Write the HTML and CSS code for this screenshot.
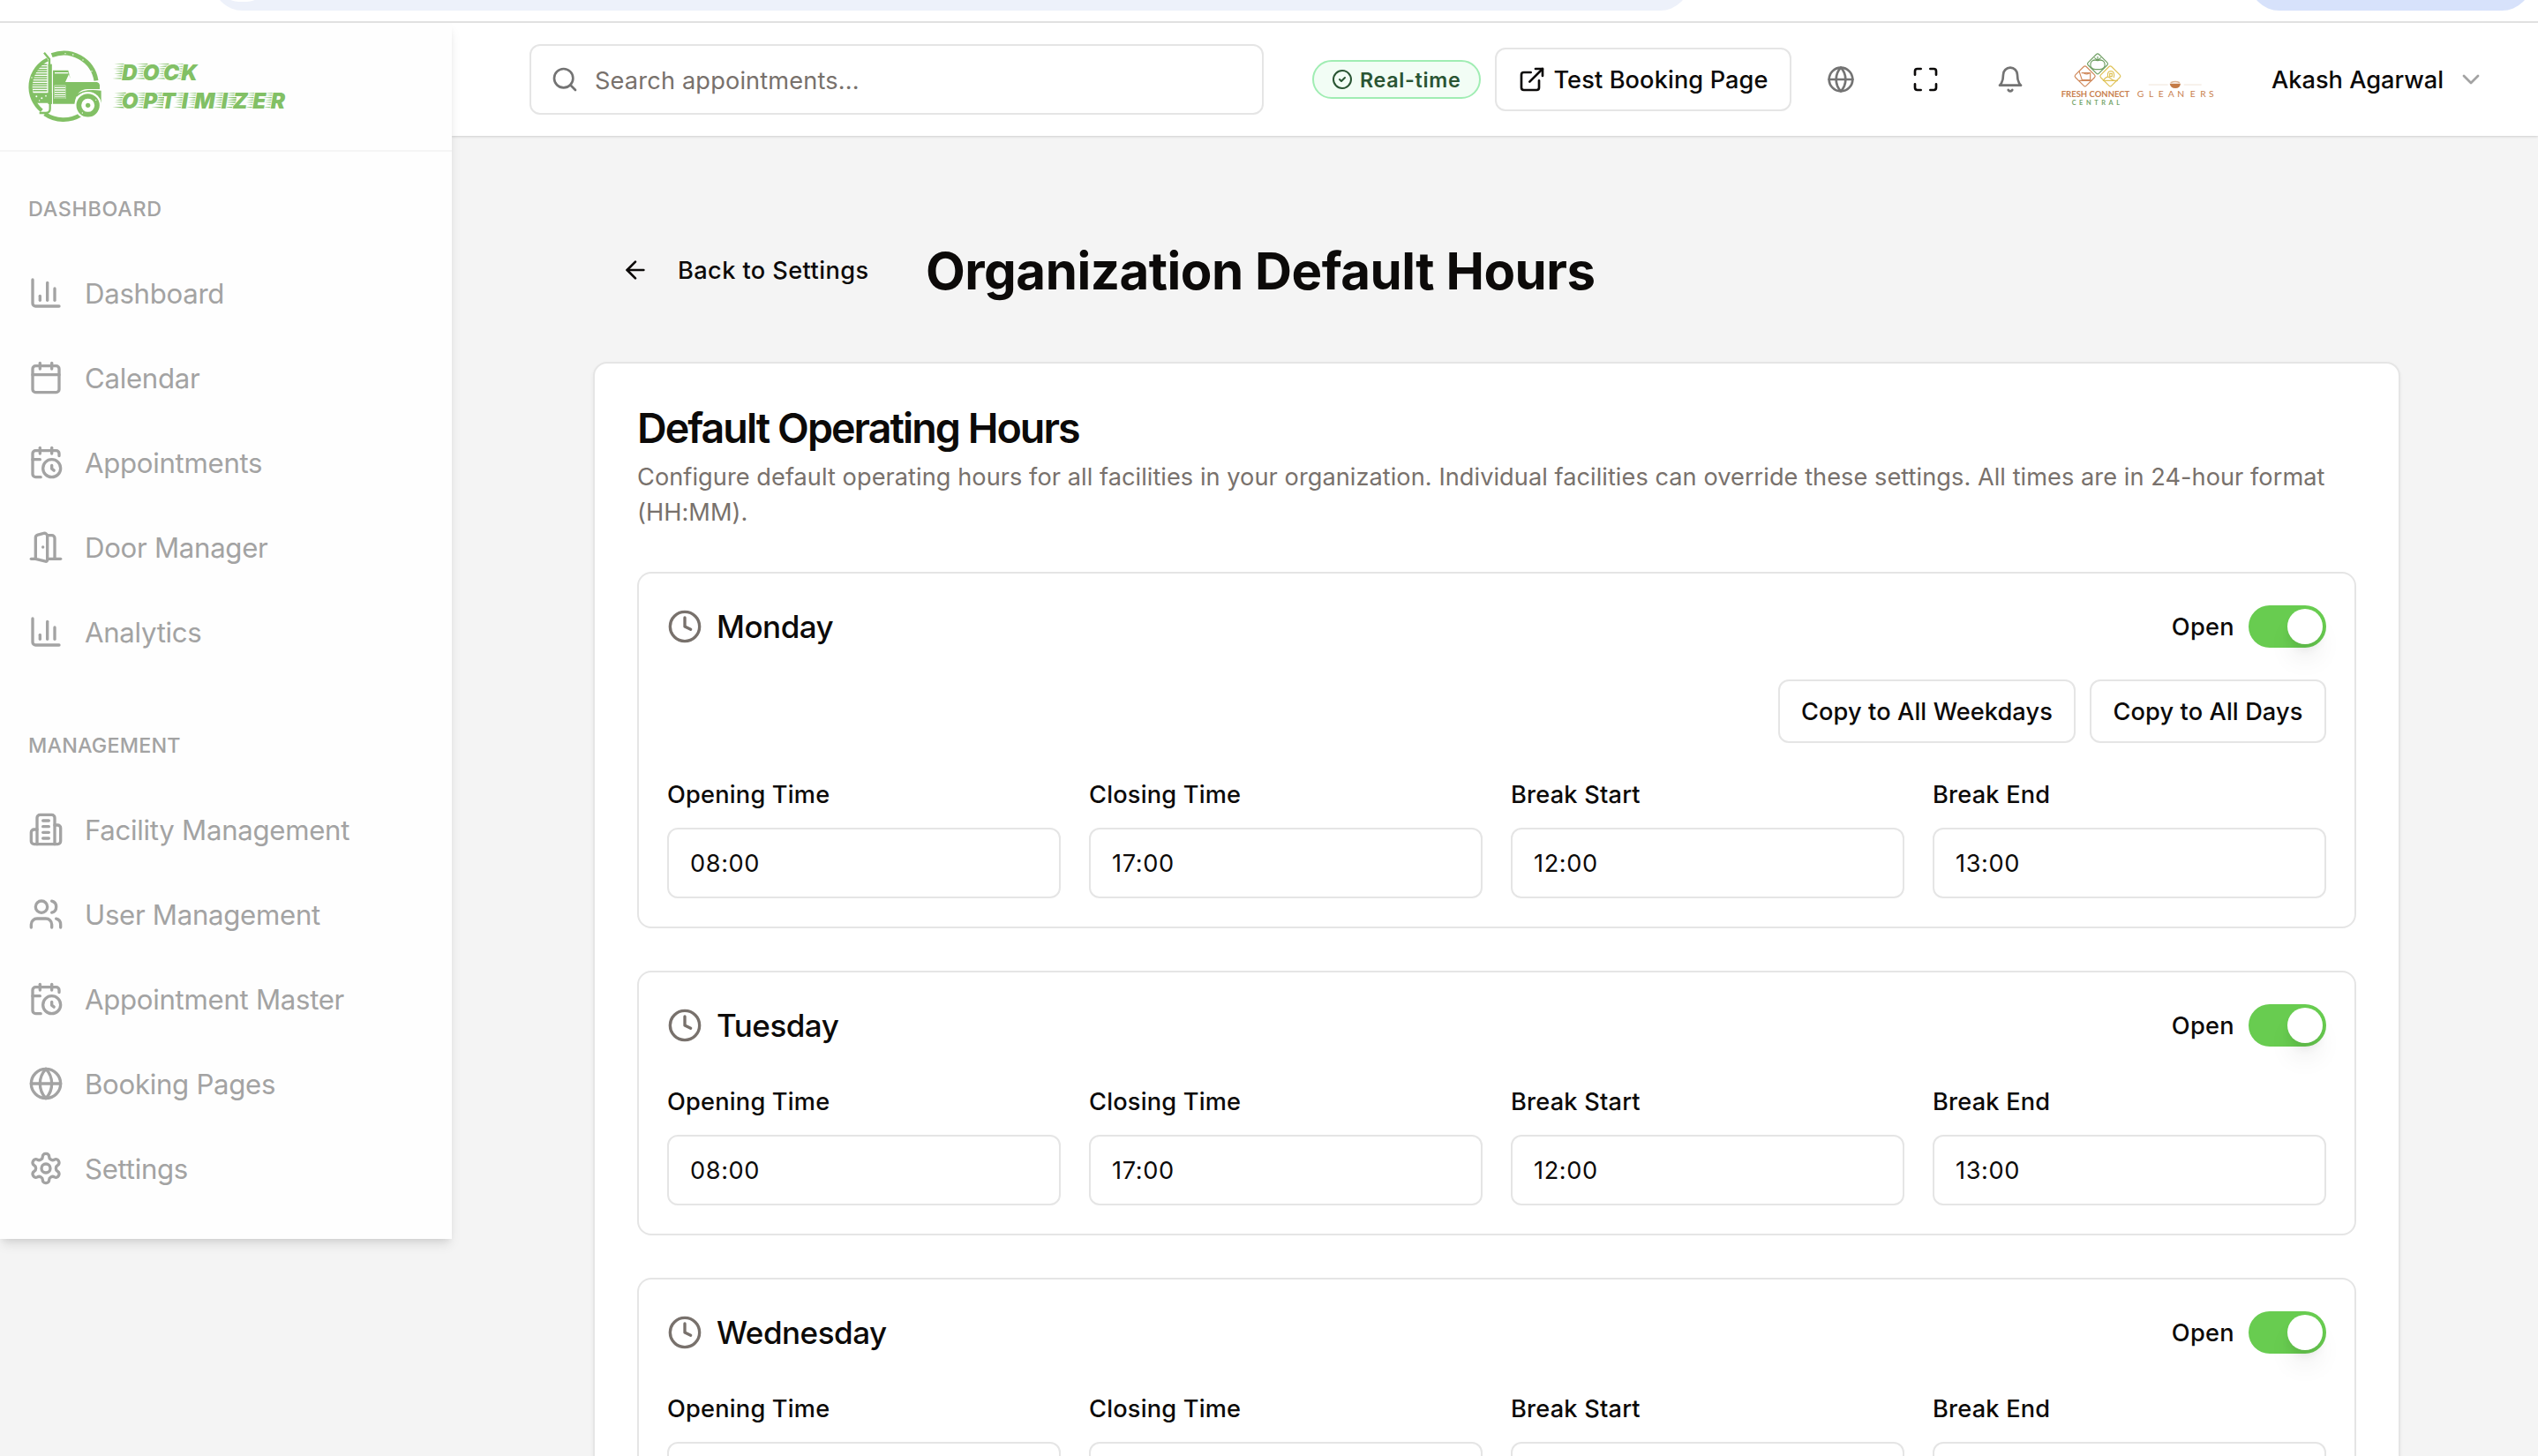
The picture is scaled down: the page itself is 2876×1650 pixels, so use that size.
FILE: index.html
```html
<!DOCTYPE html>
<html lang="en">
<head>
<meta charset="utf-8">
<title>Organization Default Hours</title>
<link rel="stylesheet" href="styles.css">
</head>
<body>
<svg class="sprite" aria-hidden="true">
  <symbol id="i-chart" viewBox="0 0 24 24"><path d="M3 3v16a2 2 0 0 0 2 2h16"/><path d="M18 17V9"/><path d="M13 17V5"/><path d="M8 17v-3"/></symbol>
  <symbol id="i-calendar" viewBox="0 0 24 24"><path d="M8 2v4"/><path d="M16 2v4"/><rect width="18" height="18" x="3" y="4" rx="2"/><path d="M3 10h18"/></symbol>
  <symbol id="i-calendar-clock" viewBox="0 0 24 24"><path d="M21 7.5V6a2 2 0 0 0-2-2H5a2 2 0 0 0-2 2v14a2 2 0 0 0 2 2h3.5"/><path d="M16 2v4"/><path d="M8 2v4"/><path d="M3 10h5"/><path d="M17.5 17.5 16 16.3V14"/><circle cx="16" cy="16" r="6"/></symbol>
  <symbol id="i-door" viewBox="0 0 24 24"><path d="M13 4h3a2 2 0 0 1 2 2v14"/><path d="M2 20h3"/><path d="M13 20h9"/><path d="M10 12v.01"/><path d="M13 4.562v16.157a1 1 0 0 1-1.242.97L5 20V5.562a2 2 0 0 1 1.515-1.94l4-1A2 2 0 0 1 13 4.561Z"/></symbol>
  <symbol id="i-building" viewBox="0 0 24 24"><path d="M6 22V4a2 2 0 0 1 2-2h8a2 2 0 0 1 2 2v18Z"/><path d="M6 12H4a2 2 0 0 0-2 2v6a2 2 0 0 0 2 2h2"/><path d="M18 9h2a2 2 0 0 1 2 2v9a2 2 0 0 1-2 2h-2"/><path d="M10 6h4"/><path d="M10 10h4"/><path d="M10 14h4"/><path d="M10 18h4"/></symbol>
  <symbol id="i-users" viewBox="0 0 24 24"><path d="M16 21v-2a4 4 0 0 0-4-4H6a4 4 0 0 0-4 4v2"/><circle cx="9" cy="7" r="4"/><path d="M22 21v-2a4 4 0 0 0-3-3.87"/><path d="M16 3.13a4 4 0 0 1 0 7.75"/></symbol>
  <symbol id="i-globe" viewBox="0 0 24 24"><circle cx="12" cy="12" r="10"/><path d="M12 2a14.5 14.5 0 0 0 0 20 14.5 14.5 0 0 0 0-20"/><path d="M2 12h20"/></symbol>
  <symbol id="i-settings" viewBox="0 0 24 24"><path d="M12.22 2h-.44a2 2 0 0 0-2 2v.18a2 2 0 0 1-1 1.73l-.43.25a2 2 0 0 1-2 0l-.15-.08a2 2 0 0 0-2.73.73l-.22.38a2 2 0 0 0 .73 2.73l.15.1a2 2 0 0 1 1 1.72v.51a2 2 0 0 1-1 1.74l-.15.09a2 2 0 0 0-.73 2.73l.22.38a2 2 0 0 0 2.73.73l.15-.08a2 2 0 0 1 2 0l.43.25a2 2 0 0 1 1 1.73V20a2 2 0 0 0 2 2h.44a2 2 0 0 0 2-2v-.18a2 2 0 0 1 1-1.73l.43-.25a2 2 0 0 1 2 0l.15.08a2 2 0 0 0 2.73-.73l.22-.39a2 2 0 0 0-.73-2.73l-.15-.08a2 2 0 0 1-1-1.74v-.5a2 2 0 0 1 1-1.74l.15-.09a2 2 0 0 0 .73-2.73l-.22-.38a2 2 0 0 0-2.73-.73l-.15.08a2 2 0 0 1-2 0l-.43-.25a2 2 0 0 1-1-1.73V4a2 2 0 0 0-2-2z"/><circle cx="12" cy="12" r="3"/></symbol>
  <symbol id="i-search" viewBox="0 0 24 24"><circle cx="11" cy="11" r="8"/><path d="m21 21-4.3-4.3"/></symbol>
  <symbol id="i-check" viewBox="0 0 24 24"><circle cx="12" cy="12" r="10"/><path d="m9 12 2 2 4-4"/></symbol>
  <symbol id="i-external" viewBox="0 0 24 24"><path d="M15 3h6v6"/><path d="M10 14 21 3"/><path d="M18 13v6a2 2 0 0 1-2 2H5a2 2 0 0 1-2-2V8a2 2 0 0 1 2-2h6"/></symbol>
  <symbol id="i-maximize" viewBox="0 0 24 24"><path d="M8 3H5a2 2 0 0 0-2 2v3"/><path d="M21 8V5a2 2 0 0 0-2-2h-3"/><path d="M3 16v3a2 2 0 0 0 2 2h3"/><path d="M16 21h3a2 2 0 0 0 2-2v-3"/></symbol>
  <symbol id="i-bell" viewBox="0 0 24 24"><path d="M6 8a6 6 0 0 1 12 0c0 7 3 9 3 9H3s3-2 3-9"/><path d="M10.3 21a1.94 1.94 0 0 0 3.4 0"/></symbol>
  <symbol id="i-chevron" viewBox="0 0 24 24"><path d="m6 9 6 6 6-6"/></symbol>
  <symbol id="i-arrow-left" viewBox="0 0 24 24"><path d="m12 19-7-7 7-7"/><path d="M19 12H5"/></symbol>
  <symbol id="i-clock" viewBox="0 0 24 24"><circle cx="12" cy="12" r="10"/><path d="M12 6v6l4 2"/></symbol>
</svg>

<div class="browser">
  <div class="omnibox"><span class="site-info"></span></div>
  <div class="chip"></div>
</div>

<div class="app">
  <aside class="sidebar">
    <div class="brand">
      <svg class="brand-logo" viewBox="0 0 930 300" role="img" aria-label="Dock Optimizer">
        <g fill="none" stroke="#82c065">
          <path d="M104 44A112 112 0 0 1 255 130" stroke-width="15"/>
          <path d="M90 58A104 104 0 0 0 70 232" stroke-width="13"/>
          <path d="M80 243A112 112 0 0 0 203 246" stroke-width="14"/>
          <path d="M78 35l18 22v25" stroke-width="7"/>
          <path d="M98 74v136" stroke-width="13"/>
          <path d="M98 208v18q0 14-14 14H62" stroke-width="7"/>
          <path d="M66 76h22M60 84h28M54 92h34M48 100h40M44 108h44M42 116h46M40 124h48M38 132h50M38 140h50M38 148h50M38 156h50M40 164h48" stroke-width="4.5"/>
        </g>
        <g fill="#82c065">
          <path d="M32 172h72v34H50q-12-14-18-34z"/>
          <path d="M108 95h52l8 30-6-16-12 26h108q8 2 9 10v14h-42q-34 0-42 42v8h-75v-64z"/>
          <path d="M188 178q26-22 84-14v46q-4-34-38-38-26-4-46 14z"/>
        </g>
        <rect x="114" y="102" width="46" height="4" fill="#fff"/>
        <rect x="113" y="146" width="38" height="46" fill="#fff"/>
        <path d="M114 150h36M114 158h36M114 166h36M114 174h36M114 182h36M114 189h36" stroke="#82c065" stroke-width="4"/>
        <circle cx="227" cy="214" r="46" fill="#fff"/>
        <circle cx="227" cy="214" r="31" fill="none" stroke="#82c065" stroke-width="17"/>
        <circle cx="227" cy="214" r="8" fill="#82c065"/>
        <g fill="#fff"><circle cx="150" cy="38" r="2"/><circle cx="176" cy="42" r="2.5"/><circle cx="210" cy="60" r="2"/><circle cx="240" cy="98" r="2"/><circle cx="52" cy="184" r="3"/><circle cx="70" cy="190" r="3"/><circle cx="62" cy="198" r="2"/><circle cx="84" cy="182" r="2.5"/><circle cx="36" cy="120" r="2"/><circle cx="208" cy="240" r="2"/><circle cx="254" cy="196" r="2"/></g>
        <defs>
          <g id="speed" fill="#82c065"><path d="M4 1.500 44-1v4zM10 9 43 6v5zM0 17l42-3v5.500zM8 25l33-3v5.500zM4 33l36-3v5.500zM10 41l29-3v5.500zM-2 50l40-3v5.500z"/></g>
        </defs>
        <g>
          <use href="#speed" x="312" y="73"/><use href="#speed" x="386" y="73"/><use href="#speed" x="458" y="73"/><use href="#speed" x="520" y="73"/>
          <use href="#speed" x="312" y="171"/><use href="#speed" x="386" y="171"/><use href="#speed" x="444" y="171"/><use href="#speed" x="518" y="171"/><use href="#speed" x="562" y="171"/><use href="#speed" x="652" y="171"/><use href="#speed" x="690" y="171"/><use href="#speed" x="760" y="171"/><use href="#speed" x="822" y="171"/>
        </g>
        <g class="brand-word">
          <text x="342 413 483 544" y="128">DOCK</text>
          <text x="341 415 475 545 589 680 719 787 848" y="226">OPTIMIZER</text>
        </g>
      </svg>
    </div>
    <nav class="nav">
      <h2 class="nav-title nav-title-first">DASHBOARD</h2>
      <a class="nav-item"><svg class="icon"><use href="#i-chart"/></svg><span>Dashboard</span></a>
      <a class="nav-item"><svg class="icon"><use href="#i-calendar"/></svg><span>Calendar</span></a>
      <a class="nav-item"><svg class="icon"><use href="#i-calendar-clock"/></svg><span>Appointments</span></a>
      <a class="nav-item"><svg class="icon"><use href="#i-door"/></svg><span>Door Manager</span></a>
      <a class="nav-item"><svg class="icon"><use href="#i-chart"/></svg><span>Analytics</span></a>
      <h2 class="nav-title">MANAGEMENT</h2>
      <a class="nav-item"><svg class="icon"><use href="#i-building"/></svg><span>Facility Management</span></a>
      <a class="nav-item"><svg class="icon"><use href="#i-users"/></svg><span>User Management</span></a>
      <a class="nav-item"><svg class="icon"><use href="#i-calendar-clock"/></svg><span>Appointment Master</span></a>
      <a class="nav-item"><svg class="icon"><use href="#i-globe"/></svg><span>Booking Pages</span></a>
      <a class="nav-item"><svg class="icon"><use href="#i-settings"/></svg><span>Settings</span></a>
    </nav>
  </aside>

  <div class="content">
    <header class="topbar">
      <div class="search"><svg class="icon icon-sm"><use href="#i-search"/></svg><span>Search appointments...</span></div>
      <div class="badge"><svg class="icon icon-xs"><use href="#i-check"/></svg><span>Real-time</span></div>
      <button class="btn btn-test"><svg class="icon icon-sm"><use href="#i-external"/></svg><span>Test Booking Page</span></button>
      <div class="tools">
        <span class="tool"><svg class="icon icon-sm"><use href="#i-globe"/></svg></span>
        <span class="tool tool-dark"><svg class="icon icon-sm"><use href="#i-maximize"/></svg></span>
        <span class="tool"><svg class="icon icon-sm"><use href="#i-bell"/></svg></span>
      </div>
      <svg class="org-logo" viewBox="0 0 600 240" role="img" aria-label="Fresh Connect Central, Gleaners">
        <g fill="none" stroke-width="3.500" stroke-linejoin="round">
          <g stroke="#6f9f63"><rect x="-26" y="-26" width="52" height="52" rx="6" transform="translate(171 67) rotate(45)"/><path d="M171 56c-30-10-32 30-8 30h16c24 0 22-40-8-30zM160 46l11 9 11-9M171 42v13M155 54l16 1 14-1"/></g>
          <g stroke="#d08a5c"><rect x="-26" y="-26" width="52" height="52" rx="6" transform="translate(128 109) rotate(45)"/><path d="M108 92l10 30h28V98h-30M108 124h44M122 98q10 8 22 0"/></g>
          <g stroke="#dfc257"><rect x="-26" y="-26" width="52" height="52" rx="6" transform="translate(214 109) rotate(45)"/><path d="M190 124q12-20 24-8t24 8zM206 112q-4-20 10-20t10 22M212 100h8v10h-8z"/></g>
        </g>
        <text class="org-a" x="47" y="181" textLength="233" lengthAdjust="spacingAndGlyphs">FRESH CONNECT</text>
        <text class="org-b" x="83" y="208" textLength="163">CENTRAL</text>
        <path d="M344 138h66M464 138h60" stroke="#f0e4d8" stroke-width="3"/>
        <path d="M416 134h37q-2 16-18 16t-19-16z" fill="#c47a45"/>
        <path d="M419 131q16-7 31 0" fill="none" stroke="#dcb596" stroke-width="5"/>
        <text class="org-c" x="305 345 377 410 442 485 520 549" y="179">GLEANERS</text>
      </svg>
      <div class="user"><span>Akash Agarwal</span><svg class="icon icon-sm"><use href="#i-chevron"/></svg></div>
    </header>

    <main class="main">
      <div class="page-head">
        <a class="back"><svg class="icon icon-sm"><use href="#i-arrow-left"/></svg><span>Back to Settings</span></a>
        <h1 class="page-title">Organization Default Hours</h1>
      </div>
      <section class="card">
        <h2 class="card-title">Default Operating Hours</h2>
        <p class="card-desc">Configure default operating hours for all facilities in your organization. Individual facilities can override these settings. All times are in 24-hour format (HH:MM).</p>
        <div class="days">
          <article class="day">
            <div class="day-head">
              <svg class="icon"><use href="#i-clock"/></svg><h3 class="day-name">Monday</h3>
              <span class="state">Open</span><span class="switch"><span class="knob"></span></span>
            </div>
            <div class="day-actions"><button class="btn">Copy to All Weekdays</button><button class="btn">Copy to All Days</button></div>
            <div class="times">
              <label class="field"><span class="label">Opening Time</span><span class="input">08:00</span></label>
              <label class="field"><span class="label">Closing Time</span><span class="input">17:00</span></label>
              <label class="field"><span class="label">Break Start</span><span class="input">12:00</span></label>
              <label class="field"><span class="label">Break End</span><span class="input">13:00</span></label>
            </div>
          </article>
          <article class="day">
            <div class="day-head">
              <svg class="icon"><use href="#i-clock"/></svg><h3 class="day-name">Tuesday</h3>
              <span class="state">Open</span><span class="switch"><span class="knob"></span></span>
            </div>
            <div class="times">
              <label class="field"><span class="label">Opening Time</span><span class="input">08:00</span></label>
              <label class="field"><span class="label">Closing Time</span><span class="input">17:00</span></label>
              <label class="field"><span class="label">Break Start</span><span class="input">12:00</span></label>
              <label class="field"><span class="label">Break End</span><span class="input">13:00</span></label>
            </div>
          </article>
          <article class="day">
            <div class="day-head">
              <svg class="icon"><use href="#i-clock"/></svg><h3 class="day-name">Wednesday</h3>
              <span class="state">Open</span><span class="switch"><span class="knob"></span></span>
            </div>
            <div class="times">
              <label class="field"><span class="label">Opening Time</span><span class="input"></span></label>
              <label class="field"><span class="label">Closing Time</span><span class="input"></span></label>
              <label class="field"><span class="label">Break Start</span><span class="input"></span></label>
              <label class="field"><span class="label">Break End</span><span class="input"></span></label>
            </div>
          </article>
        </div>
      </section>
    </main>
  </div>
</div>
</body>
</html>
```
FILE: styles.css
```css
* { box-sizing: border-box; margin: 0; padding: 0; }

body {
  height: 1650px;
  overflow: hidden;
  background: #f4f4f4;
  color: #0c0a09;
  font-family: Inter, "Liberation Sans", sans-serif;
  font-size: 27.2px;
  font-weight: 500;
  letter-spacing: .15px;
}

.sprite { display: none; }

.icon {
  flex: none;
  width: 40px;
  height: 40px;
  fill: none;
  stroke: currentColor;
  stroke-width: 2;
  stroke-linecap: round;
  stroke-linejoin: round;
}
.icon-sm { width: 32px; height: 32px; }
.icon-xs { width: 24px; height: 24px; }

/* browser toolbar edge */
.browser {
  display: flex;
  align-items: flex-end;
  justify-content: space-between;
  height: 26px;
  padding: 0 7px 12px 241px;
  border-bottom: 2px solid #e1e1e1;
  background: #fff;
  overflow: hidden;
}
.omnibox, .chip { flex: none; height: 68px; border-radius: 34px; }
.omnibox {
  display: flex;
  align-items: center;
  width: 1674px;
  padding-left: 6px;
  background: #edf1fa;
}
.site-info { width: 56px; height: 48px; border-radius: 28px; background: #fff; }
.chip { width: 320px; background: #d7e2fb; }

.app { display: flex; align-items: flex-start; height: 1624px; overflow: hidden; }

/* sidebar */
.sidebar {
  position: relative;
  z-index: 2;
  flex: none;
  width: 512px;
  height: 1378px;
  background: #fefefe;
  color: #a3a3a3;
  box-shadow: 0 8px 12px -2px rgba(0, 0, 0, .1), 0 4px 8px -4px rgba(0, 0, 0, .1);
}
.brand { height: 146px; padding: 22px 24px; border-bottom: 2px solid #f5f5f5; }
.brand-logo { display: block; width: 310px; height: 100px; }
.brand-word {
  fill: #82c065;
  stroke: #fff;
  stroke-width: 5;
  paint-order: stroke;
  font: italic 900 73px Inter, sans-serif;
  letter-spacing: 0;
}
.nav { padding: 0 32px; }
.nav-title {
  height: 32px;
  margin: 64px 0 32px;
  line-height: 34px;
  font-size: 23.3px;
  font-weight: 500;
  letter-spacing: .2px;
}
.nav-title-first { margin: 48px 0 32px; letter-spacing: .7px; }
.nav-item {
  display: flex;
  align-items: center;
  gap: 24px;
  height: 96px;
  font-size: 31.2px;
  font-weight: 400;
  letter-spacing: -.3px;
}
.nav-item span { padding-top: 2px; }

/* top bar */
.content { flex: 1; min-width: 0; }
.topbar {
  display: flex;
  align-items: center;
  height: 128px;
  padding: 0 60px 0 88px;
  background: #fff;
  box-shadow: 0 1px 3px rgba(0, 0, 0, .1), 0 1px 2px rgba(0, 0, 0, .06);
}
.search {
  display: flex;
  align-items: center;
  gap: 18px;
  width: 832px;
  height: 80px;
  padding-left: 22px;
  border: 2px solid #e5e5e5;
  border-radius: 12px;
  color: #78716c;
  font-weight: 400;
}
.search span { padding-top: 2px; }
.search .icon { color: #737373; }
.badge {
  display: flex;
  align-items: center;
  gap: 8px;
  width: 191px;
  height: 44px;
  margin-left: 55px;
  padding-left: 20px;
  border: 2px solid #a0edb3;
  border-radius: 22px;
  background: #f2fdf5;
  color: #2a5533;
  font-size: 23.3px;
  font-weight: 600;
  letter-spacing: .68px;
}
.btn {
  display: flex;
  align-items: center;
  justify-content: center;
  height: 72px;
  padding: 0 24px;
  border: 2px solid #e5e5e5;
  border-radius: 12px;
  background: #fff;
  color: #0c0a09;
  font: inherit;
  letter-spacing: .1px;
  white-space: nowrap;
}
.btn-test { gap: 8px; width: 336px; margin-left: 16px; letter-spacing: .1px; }
.tools { display: flex; gap: 16px; margin-left: 16px; }
.tool {
  display: flex;
  align-items: center;
  justify-content: center;
  width: 80px;
  height: 80px;
  color: #737373;
}
.tool-dark { color: #0c0a09; }
.org-logo { flex: none; width: 200px; height: 80px; margin-left: 2px; }
.org-a { fill: #c9814f; font: 700 26px Lato, sans-serif; letter-spacing: 0; }
.org-b { fill: #76a56c; font: 700 22px Lato, sans-serif; letter-spacing: 0; }
.org-c { fill: #c9814f; font: 400 31px Lato, sans-serif; letter-spacing: 0; }
.user {
  display: flex;
  align-items: center;
  justify-content: space-between;
  flex: 1;
  padding-left: 54px;
  letter-spacing: 0;
}
.user .icon { color: #a3a3a3; }

/* page */
.main { padding: 112px 156px 0 160px; }
.page-head { display: flex; align-items: center; height: 80px; padding-left: 32px; }
.back { display: flex; align-items: center; gap: 32px; width: 345px; letter-spacing: .4px; }
.page-title { padding-top: 1px; font-size: 58.2px; font-weight: 700; line-height: 72px; letter-spacing: -.5px; white-space: nowrap; }

.card {
  margin-top: 64px;
  height: 1600px;
  padding: 48px;
  border: 2px solid #e5e5e5;
  border-radius: 16px;
  background: #fff;
  box-shadow: 0 2px 4px rgba(0, 0, 0, .05);
}
.card-title { padding-top: 1px; font-size: 46.6px; font-weight: 600; line-height: 48px; letter-spacing: -1.97px; }
.card-desc { margin-top: 12px; color: #78716c; font-weight: 400; line-height: 40px; letter-spacing: .04px; }
.days { display: flex; flex-direction: column; gap: 48px; margin-top: 47px; }

.day { padding: 32px; border: 2px solid #e5e5e5; border-radius: 16px; }
.day-head { display: flex; align-items: center; height: 56px; }
.day-head > .icon { color: #78716c; }
.day-name { margin-left: 16px; font-size: 35px; font-weight: 500; letter-spacing: -.5px; }
.state { margin-left: auto; letter-spacing: .3px; }
.switch {
  display: flex;
  align-items: center;
  justify-content: flex-end;
  width: 88px;
  height: 48px;
  margin-left: 16px;
  padding: 0 4px;
  border-radius: 24px;
  background: #68cc50;
}
.knob {
  width: 40px;
  height: 40px;
  border-radius: 50%;
  background: #fff;
  box-shadow: 0 20px 30px -6px rgba(0, 0, 0, .1), 0 8px 12px -4px rgba(0, 0, 0, .1);
}
.day-actions { display: flex; justify-content: flex-end; gap: 16px; margin-top: 32px; }
.day-actions .btn:first-child { width: 337px; }
.day-actions .btn:last-child { width: 268px; }

.times { display: grid; grid-template-columns: repeat(4, 1fr); gap: 32px; margin-top: 32px; }
.field { display: flex; flex-direction: column; gap: 10px; }
.label { line-height: 54px; letter-spacing: .2px; }
.input {
  height: 80px;
  padding: 0 24px;
  border: 2px solid #e5e5e5;
  border-radius: 12px;
  font-weight: 400;
  line-height: 78px;
  letter-spacing: .6px;
}
```
